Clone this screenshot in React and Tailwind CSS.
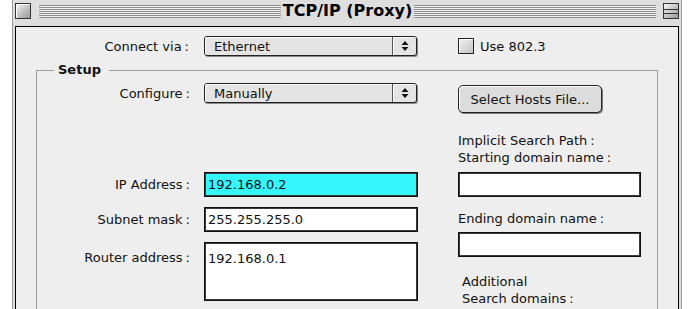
const Arrows = () => (
  <svg width="8" height="12" viewBox="0 0 8 12">
    <path d="M4 1 L7.5 5 H0.5 Z M4 11 L7.5 7 H0.5 Z" fill="#111" />
  </svg>
);

// Charcoal-style colon: a little air before it
const L = ({ t }) => (
  <>
    {t}
    <span className="ml-[3px]">:</span>
  </>
);

const Popup = ({ children }) => (
  <div className="flex h-[20px] w-[213px] rounded-[3px] border border-[#222] bg-[#e4e4e4] shadow-[1px_1px_0_#8a8a8a]">
    <div className="flex flex-1 items-center rounded-l-[2px] border-r border-[#555] pl-[9px] shadow-[inset_1px_1px_0_#fafafa]">
      {children}
    </div>
    <div className="flex w-[23px] items-center justify-center rounded-r-[2px] shadow-[inset_1px_1px_0_#fafafa]">
      <Arrows />
    </div>
  </div>
);

const Field = ({ value, cyan, tall, narrow }) => (
  <div
    className={
      "flex border border-[#111] px-[3px] shadow-[inset_0_0_0_1px_#3a3a3a] " +
      (narrow ? "w-[183px] " : "w-[214px] ") +
      (tall ? "h-[59px] items-start pt-[7px] " : "h-[25px] items-center ") +
      (cyan ? "bg-[#34f6fb]" : "bg-white")
    }
  >
    {value}
  </div>
);

const Row = ({ label, children, top }) => (
  <div className={"flex " + (top ? "items-start" : "items-center")}>
    <div className={"w-[167px] pr-[14px] text-right " + (top ? "pt-[7px]" : "")}>
      <L t={label} />
    </div>
    {children}
  </div>
);

const stripes =
  "h-[13px] flex-1 bg-[repeating-linear-gradient(to_bottom,#8c8c8c_0px,#8c8c8c_1px,#f2f2f2_1px,#f2f2f2_2px)]";

export default function App() {
  return (
    <div className="h-[309px] overflow-hidden bg-white pl-[12px] font-['DejaVu_Sans',sans-serif] text-[13px] leading-[17px] text-[#111]">
      <div className="h-[330px] w-[670px] border-l border-r border-[#9a9a9a] bg-[#dedede] px-[2px]">
        {/* title bar */}
        <div className="flex h-[22px] items-center">
          <div className="h-[16px] w-[16px] border border-[#333] bg-gradient-to-br from-[#f4f4f4] to-[#9a9a9a] shadow-[inset_1px_1px_0_#fff]" />
          <div className={stripes + " ml-[8px]"} />
          <span className="px-[2px] text-[16px] font-bold leading-[20px] text-black">TCP/IP (Proxy)</span>
          <div className={stripes} />
          <div className="ml-[7px] flex h-[16px] w-[16px] flex-col justify-center gap-[3px] border border-[#333] bg-gradient-to-br from-[#f4f4f4] to-[#9a9a9a]">
            <div className="h-[1px] bg-[#333]" />
            <div className="h-[1px] bg-[#333]" />
          </div>
        </div>

        {/* content */}
        <div className="mt-[4px] h-[300px] border border-black bg-[#eeeeee]">
          <div className="flex items-center pt-[9px]">
            <div className="w-[188px] pr-[15px] text-right">
              <L t="Connect via" />
            </div>
            <Popup>Ethernet</Popup>
            <div className="ml-[41px] h-[16px] w-[16px] border border-[#222] bg-gradient-to-br from-[#f0f0f0] to-[#c4c4c4] shadow-[inset_1px_1px_0_#fff]" />
            <span className="ml-[6px]">Use 802.3</span>
          </div>

          <fieldset className="ml-[20px] mt-[6px] h-[260px] w-[622px] border border-[#9c9c9c]">
            <legend className="ml-[17px] pl-[4px] pr-[8px] font-bold leading-[16px]">Setup</legend>
            <div className="flex">
              <div className="flex w-[381px] flex-col">
                <div className="mt-[5px]">
                  <Row label="Configure">
                    <Popup>Manually</Popup>
                  </Row>
                </div>
                <div className="mt-[69px] flex flex-col gap-[10px]">
                  <Row label="IP Address">
                    <Field value="192.168.0.2" cyan />
                  </Row>
                  <Row label="Subnet mask">
                    <Field value="255.255.255.0" />
                  </Row>
                  <Row label="Router address" top>
                    <Field value="192.168.0.1" tall />
                  </Row>
                </div>
              </div>

              <div className="ml-[40px] flex flex-col">
                <button className="mt-[7px] h-[28px] w-[144px] rounded-[5px] border border-[#222] bg-[#dcdcdc] shadow-[1px_1px_0_#7a7a7a,inset_1px_1px_0_#fff]">
                  Select Hosts File...
                </button>
                <div className="mt-[19px]">
                  <div>
                    <L t="Implicit Search Path" />
                  </div>
                  <div>
                    <L t="Starting domain name" />
                  </div>
                </div>
                <div className="mt-[6px]">
                  <Field narrow value="" />
                </div>
                <div className="mt-[13px]">
                  <L t="Ending domain name" />
                </div>
                <div className="mt-[5px]">
                  <Field narrow value="" />
                </div>
                <div className="ml-[4px] mt-[16px]">
                  <div>Additional</div>
                  <div>
                    <L t="Search domains" />
                  </div>
                </div>
              </div>
            </div>
          </fieldset>
        </div>
      </div>
    </div>
  );
}
